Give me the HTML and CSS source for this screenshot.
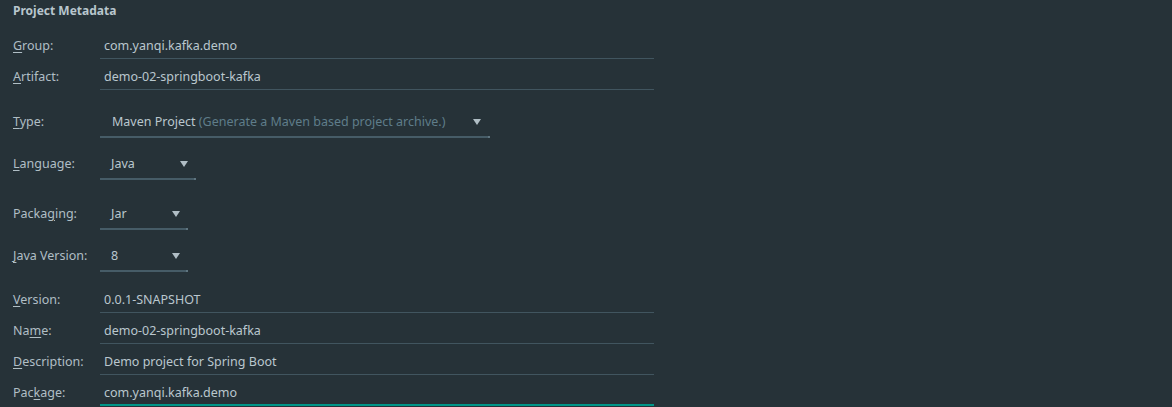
FILE: index.html
```html
<!DOCTYPE html>
<html>
<head>
<meta charset="utf-8">
<link rel="stylesheet" href="styles.css">
</head>
<body>
<div class="panel">
  <div class="title">Project Metadata</div>

  <div class="row">
    <div class="label"><u>G</u>roup:</div>
    <div class="field">com.yanqi.kafka.demo</div>
  </div>
  <div class="row">
    <div class="label"><u>A</u>rtifact:</div>
    <div class="field">demo-02-springboot-kafka</div>
  </div>

  <div class="row sel-row gap-16">
    <div class="label"><u>T</u>ype:</div>
    <div class="select select-type">
      <span class="value">Maven Project <span class="hint">(Generate a Maven based project archive.)</span></span>
      <span class="arrow"></span>
    </div>
  </div>

  <div class="row sel-row gap-10">
    <div class="label"><u>L</u>anguage:</div>
    <div class="select select-lang">
      <span class="value">Java</span>
      <span class="arrow"></span>
    </div>
  </div>

  <div class="row sel-row gap-18">
    <div class="label">Packa<u>g</u>ing:</div>
    <div class="select select-small">
      <span class="value">Jar</span>
      <span class="arrow"></span>
    </div>
  </div>

  <div class="row sel-row gap-10">
    <div class="label"><u>J</u>ava Version:</div>
    <div class="select select-small">
      <span class="value">8</span>
      <span class="arrow"></span>
    </div>
  </div>

  <div class="row gap-10">
    <div class="label"><u>V</u>ersion:</div>
    <div class="field">0.0.1-SNAPSHOT</div>
  </div>
  <div class="row">
    <div class="label">Na<u>m</u>e:</div>
    <div class="field">demo-02-springboot-kafka</div>
  </div>
  <div class="row">
    <div class="label"><u>D</u>escription:</div>
    <div class="field">Demo project for Spring Boot</div>
  </div>
  <div class="row">
    <div class="label">Pac<u>k</u>age:</div>
    <div class="field focused">com.yanqi.kafka.demo</div>
  </div>
</div>
</body>
</html>
```

FILE: styles.css
```css
html, body {
  margin: 0;
  padding: 0;
  background: #263238;
}

body {
  font-family: "Noto Sans", "Open Sans", sans-serif;
  font-size: 12.5px;
  color: #b4c2c9;
  width: 1172px;
  height: 407px;
  overflow: hidden;
}

.panel {
  display: flex;
  flex-direction: column;
  padding-left: 13px;
}

.title {
  font-weight: bold;
  font-size: 12px;
  padding-top: 3px;
  line-height: 16px;
  height: 16px;
  margin-bottom: 9px;
  color: #b8c6cd;
}

.row {
  display: flex;
  align-items: flex-start;
}

.label {
  width: 87px;
  flex: none;
  box-sizing: border-box;
  padding-top: 6px;
  line-height: 24px;
  white-space: nowrap;
  color: #b0bec5;
}

.label u {
  text-decoration-thickness: 1px;
  text-underline-offset: 2px;
}

.sel-row .label {
  padding-top: 4px;
}

.field {
  width: 554px;
  height: 31px;
  box-sizing: border-box;
  padding: 6px 0 0 4px;
  line-height: 24px;
  border-bottom: 1px solid #41555f;
  color: #bac7ce;
  white-space: nowrap;
}

.field.focused {
  border-bottom: 2px solid #009688;
}

.select {
  display: flex;
  align-items: center;
  justify-content: space-between;
  height: 32px;
  box-sizing: border-box;
  padding: 4px 8px 2px 11px;
  line-height: 24px;
  border-bottom: 2px solid #465c67;
  white-space: nowrap;
  position: relative;
}

.select::after {
  content: "";
  position: absolute;
  right: 0;
  bottom: -2px;
  width: 2px;
  height: 2px;
  background: #5f7580;
}

.select-type {
  width: 390px;
  padding-left: 12px;
  padding-right: 9px;
}

.select-lang {
  width: 96px;
}

.select-small {
  width: 88px;
}

.value {
  color: #bac7ce;
}

.hint {
  color: #5f7d8a;
}

.arrow {
  width: 0;
  height: 0;
  border-left: 4px solid transparent;
  border-right: 4px solid transparent;
  border-top: 6px solid #b0bec5;
  margin-top: 0;
}

.gap-16 { margin-top: 16px; }
.gap-10 { margin-top: 10px; }
.gap-18 { margin-top: 18px; }
```
